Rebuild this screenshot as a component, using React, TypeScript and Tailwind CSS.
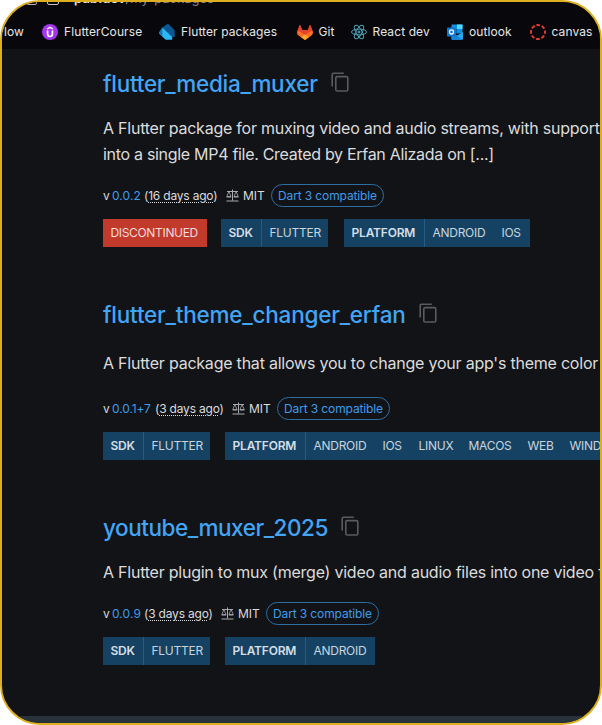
import type { ReactNode } from "react";

function CourseIcon() {
  return (
    <svg viewBox="0 0 16 16" className="size-4 shrink-0">
      <circle cx="8" cy="8" r="8" fill="#a435f0" />
      <path d="M5 5 8 3.300l3 1.700" fill="none" stroke="#fff" strokeWidth="1.400" />
      <path d="M5.600 6.600v3.500a2.400 2.400 0 0 0 4.800 0V6.600" fill="none" stroke="#fff" strokeWidth="1.700" />
    </svg>
  );
}

function DartIcon() {
  return (
    <svg viewBox="0 0 16 16" className="size-4 shrink-0">
      <path d="M3.400 3.400 8 .3c.7-.4 1.500-.2 2 .3l5.700 5.800V13h-3z" fill="#0a5795" />
      <path d="M3.400 3.400.3 8.300c-.3.600-.2 1.200.3 1.700L4 13.200l2.700 2.500h6.500V13z" fill="#2cb7f6" />
      <path d="M3.400 3.400 .3 8.300c-.3.600-.2 1.200.3 1.700L3.400 12.500z" fill="#1a76b5" />
    </svg>
  );
}

function GitLabIcon() {
  return (
    <svg viewBox="0 0 16 16" className="size-4 shrink-0">
      <path d="M2.900.8 5.200 6h5.600L13.100.8l2.600 6.500a3.800 3.800 0 0 1-1.200 4.200L8 15.900l-6.500-4.400A3.800 3.800 0 0 1 .3 7.300z" fill="#fc6d26" />
      <path d="M2.900.8 5.200 6h5.600L13.100.8l2.400 6L13 7.500 8 11.300 3 7.500.5 6.800z" fill="#e24329" />
      <path d="m4.200 13.300 3.800-3 3.800 3L8 15.900z" fill="#fca326" />
    </svg>
  );
}

function ReactIcon() {
  return (
    <svg viewBox="0 0 16 16" className="size-4 shrink-0" fill="none" stroke="#4f9fb3" strokeWidth="1">
      <circle cx="8" cy="8" r="1" fill="#4f9fb3" />
      <ellipse cx="8" cy="8" rx="7.500" ry="2.900" />
      <ellipse cx="8" cy="8" rx="7.500" ry="2.900" transform="rotate(60 8 8)" />
      <ellipse cx="8" cy="8" rx="7.500" ry="2.900" transform="rotate(120 8 8)" />
    </svg>
  );
}

function OutlookIcon() {
  return (
    <svg viewBox="0 0 16 16" className="size-4 shrink-0">
      <rect x="4.500" y="0.500" width="11" height="9" rx="0.800" fill="#1490df" />
      <path d="M10 .5h5.500v4.500H10z" fill="#50d9ff" />
      <path d="M5 5h5v4H5z" fill="#0364b8" />
      <path d="M4.500 8.500 10 11.500 16 8v6.800c0 .5-.4.900-.9.900H5.400c-.5 0-.9-.4-.9-.9z" fill="#28a8ea" />
      <path d="m4.500 8.500 11 7.200H5.400c-.5 0-.9-.4-.9-.9z" fill="#1784d9" />
      <rect x="0" y="3.500" width="9" height="9" rx="0.800" fill="#0f78d4" />
      <ellipse cx="4.500" cy="8" rx="2" ry="2.100" fill="none" stroke="#fff" strokeWidth="1.300" />
    </svg>
  );
}

function CanvasIcon() {
  return (
    <svg viewBox="0 0 16 16" className="size-4 shrink-0" fill="none" stroke="#e43d30">
      <circle cx="8" cy="8" r="7" strokeWidth="1.900" strokeDasharray="3.700 1.798" strokeDashoffset="1.850" />
    </svg>
  );
}

function CopyIcon() {
  return (
    <svg viewBox="0 0 18 20" className="h-5 w-[18px] shrink-0" fill="none" stroke="#5a5b5e" strokeWidth="1.600">
      <path d="M1.200 14.500V2.500A1.300 1.300 0 0 1 2.500 1.200h10.300" />
      <rect x="4.800" y="4.600" width="12" height="14.400" rx="1.300" />
    </svg>
  );
}

function ScalesIcon() {
  return (
    <svg viewBox="0 0 13 13" className="size-[13px] shrink-0" fill="none" stroke="#a9abae" strokeWidth="1">
      <path d="M6.500.5v11M1 2.500h11M.5 12h12" />
      <path d="M2.900 2.500.8 7.500h4.200zM10.100 2.500 8 7.500h4.200z" strokeWidth="0.800" />
      <path d="M.6 8h4.600M7.800 8h4.600" strokeWidth="1.200" />
    </svg>
  );
}

function Bookmark({ icon, label, width }: { icon: ReactNode; label: string; width: string }) {
  return (
    <div className={`flex shrink-0 items-center gap-1.5 ${width}`}>
      {icon}
      <span>{label}</span>
    </div>
  );
}

function Tag({ title, titleWidth, items }: { title: string; titleWidth: string; items: [string, string][] }) {
  return (
    <div className="flex h-full shrink-0 items-center bg-[#154263] pr-[3px] text-[#c9d5de]">
      <span className={`flex h-full shrink-0 items-center border-r border-[#235d87] pl-[7.5px] font-semibold tracking-[-0.2px] text-[#d6dfe6] ${titleWidth}`}>
        {title}
      </span>
      <span className="flex pl-[7.5px]">
        {items.map(([name, width]) => (
          <span key={name} className={`shrink-0 tracking-[-0.27px] ${width}`}>
            {name}
          </span>
        ))}
      </span>
    </div>
  );
}

type PackageProps = {
  name: string;
  nameClass: string;
  description: [string, string][];
  version: string;
  versionClass: string;
  age: string;
  ageClass: string;
  children: ReactNode;
  className: string;
  descClass: string;
};

function Package(p: PackageProps) {
  return (
    <section className={`flex flex-col ${p.className}`}>
      <div className="flex h-[30px] items-center">
        <h2 className={`shrink-0 text-[22.5px] leading-[30px] font-medium text-[#42a5f5] ${p.nameClass}`}>{p.name}</h2>
        <div className="-mt-1">
          <CopyIcon />
        </div>
      </div>
      <div className={`text-[16px] leading-[26px] text-[#dcdcdd] ${p.descClass}`}>
        {p.description.map(([line, tracking]) => (
          <p key={line} className={tracking}>
            {line}
          </p>
        ))}
      </div>
      <div className="flex h-[23px] items-center text-[12px] text-[#dcdcde]">
        <span className="w-[9px]">v</span>
        <span className={`text-[#3f9cea] ${p.versionClass}`}>{p.version}</span>
        <span className={`tracking-[-0.2px] ${p.ageClass}`}>
          (<span className="underline decoration-dotted decoration-1 underline-offset-2">{p.age}</span>)
        </span>
        <ScalesIcon />
        <span className="ml-1 w-7">MIT</span>
        <span className="flex h-[23px] w-[113px] items-center justify-center rounded-full border border-[#2d6fa3] tracking-[-0.12px] text-[#3f9cea]">
          Dart 3 compatible
        </span>
      </div>
      <div className="mt-3 flex h-[28px] text-[12px]">{p.children}</div>
    </section>
  );
}

export default function App() {
  return (
    <div className="bg-white font-['Inter',sans-serif]">
      <div className="flex h-[725px] w-[602px] flex-col overflow-hidden rounded-[40px] border-2 border-[#dcae20] bg-[#121317] whitespace-nowrap">
        <header className="h-[47px] shrink-0 bg-[#08080c]">
          <div className="flex h-[14px] items-start overflow-hidden pl-6">
            <span className="-mt-1.5 h-[9px] w-[11px] rounded-xs border-[1.5px] border-[#b5b5b8]" />
            <span className="-mt-1.5 ml-[10px] flex h-[9px] w-[12px] items-end justify-center rounded-xs border-[1.5px] border-[#c4c4c7] pb-0.5">
              <i className="h-[2px] w-[5px] bg-[#c4c4c7]" />
            </span>
            <span className="-mt-[13px] ml-[15px] text-[13px] leading-[18px] text-[#85858c]">
              <b className="font-semibold text-[#e2e2e4]">pub.dev</b>/my-packages
            </span>
          </div>
          <div className="flex h-8 items-center text-[12px] tracking-[0.1px] text-[#e6e6e8]">
            <span className="w-10 shrink-0 pl-[2px]">low</span>
            <Bookmark icon={<CourseIcon />} label="FlutterCourse" width="w-[117px]" />
            <Bookmark icon={<DartIcon />} label="Flutter packages" width="w-[137.5px]" />
            <Bookmark icon={<GitLabIcon />} label="Git" width="w-[54px]" />
            <Bookmark icon={<ReactIcon />} label="React dev" width="w-[96.5px]" />
            <Bookmark icon={<OutlookIcon />} label="outlook" width="w-[82.5px]" />
            <Bookmark icon={<CanvasIcon />} label="canvas" width="w-[64px]" />
          </div>
        </header>

        <main className="grow overflow-hidden pl-[101px]">
          <Package
            name="flutter_media_muxer"
            nameClass="w-[228px] tracking-[-0.26px]"
            className="mt-5"
            description={[
              ["A Flutter package for muxing video and audio streams, with support", "tracking-[-0.236px]"],
              ["into a single MP4 file. Created by Erfan Alizada on [...]", "tracking-[-0.3px]"],
            ]}
            descClass="mt-[15.5px] mb-[17.5px]"
            version="0.0.2"
            versionClass="w-8 tracking-[0.1px]"
            age="16 days ago"
            ageClass="w-[82px]"
          >
            <div className="mr-3.5 flex w-[104px] items-center bg-[#c13a2c] pl-[7.5px] tracking-[-0.33px] text-[#f0dcda]">DISCONTINUED</div>
            <Tag title="SDK" titleWidth="w-[41px]" items={[["FLUTTER", "w-[55.5px]"]]} />
            <div className="w-4 shrink-0" />
            <Tag title="PLATFORM" titleWidth="w-[81px]" items={[["ANDROID", "w-[69px]"], ["IOS", "w-[25px]"]]} />
          </Package>
          <Package
            name="flutter_theme_changer_erfan"
            nameClass="w-[315.5px] tracking-[-0.22px]"
            className="mt-[52.5px]"
            description={[["A Flutter package that allows you to change your app's theme color", "tracking-[-0.22px]"]]}
            descClass="mt-[20px] mb-[21.5px]"
            version="0.0.1+7"
            versionClass="w-[43px] tracking-[-0.1px]"
            age="3 days ago"
            ageClass="w-[77px]"
          >
            <Tag title="SDK" titleWidth="w-[41px]" items={[["FLUTTER", "w-[55.5px]"]]} />
            <div className="w-[15px] shrink-0" />
            <Tag
              title="PLATFORM"
              titleWidth="w-[81px]"
              items={[["ANDROID", "w-[69px]"], ["IOS", "w-9"], ["LINUX", "w-[50px]"], ["MACOS", "w-[59px]"], ["WEB", "w-[42px]"], ["WIND", "w-[60px]"]]}
            />
          </Package>
          <Package
            name="youtube_muxer_2025"
            nameClass="w-[238px] tracking-[-0.46px]"
            className="mt-[53px]"
            description={[["A Flutter plugin to mux (merge) video and audio files into one video f", "tracking-[-0.236px]"]]}
            descClass="mt-4 mb-[17px]"
            version="0.0.9"
            versionClass="w-8 tracking-[0.1px]"
            age="3 days ago"
            ageClass="w-[77px]"
          >
            <Tag title="SDK" titleWidth="w-[41px]" items={[["FLUTTER", "w-[55.5px]"]]} />
            <div className="w-[15px] shrink-0" />
            <Tag title="PLATFORM" titleWidth="w-[81px]" items={[["ANDROID", "w-[58px]"]]} />
          </Package>
        </main>
        <footer className="h-[7px] shrink-0 bg-[#27323a]" />
      </div>
    </div>
  );
}
